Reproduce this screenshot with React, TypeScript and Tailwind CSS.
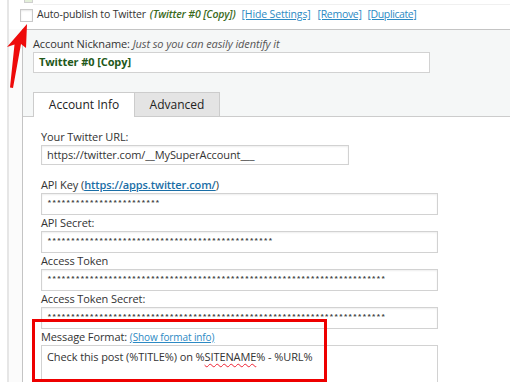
const font = { fontFamily: '"Open Sans", "Noto Sans", sans-serif' };

const Label = ({ children }: { children: React.ReactNode }) => (
  <div className="h-[16px] leading-[16px] text-[11px] tracking-[-0.1px] text-[#333] whitespace-nowrap">{children}</div>
);

const Field = ({ label, value, w = "w-[397px]", h = "h-[22px]" }: { label: React.ReactNode; value: string; w?: string; h?: string }) => (
  <div className="flex flex-col">
    <Label>{label}</Label>
    <div className={`${w} ${h} border border-[#d2d2d2] bg-white shadow-[inset_0_1px_2px_rgba(0,0,0,0.07)] flex items-center px-[5px] text-[11px] tracking-[-0.1px] text-[#333] overflow-hidden whitespace-nowrap`}>
      {value}
    </div>
  </div>
);

const stars = (n: number) => "*".repeat(n);

const SecretField = ({ label, n }: { label: React.ReactNode; n: number }) => (
  <div className="flex flex-col">
    <Label>{label}</Label>
    <div className="w-[397px] h-[22px] border border-[#d2d2d2] bg-white shadow-[inset_0_1px_2px_rgba(0,0,0,0.07)] flex items-center px-[5px] overflow-hidden whitespace-nowrap">
      <span className="text-[8px] tracking-[-0.1px] text-[#444] font-bold leading-none -mt-[3px]" style={{ fontFamily: '"Liberation Mono", monospace' }}>
        {stars(n)}
      </span>
    </div>
  </div>
);

export default function App() {
  return (
    <div className="relative w-[510px] h-[382px] overflow-hidden bg-white" style={font}>
      <div className="flex h-full">
        {/* left gutter */}
        <div className="w-[7px] shrink-0" />
        <div className="w-[2px] shrink-0 bg-[#e6e6e6]" />
        <div className="flex-1 flex flex-col bg-[#fbfbfb]">
          {/* header row */}
          <div className="h-[29px] shrink-0 flex items-center pl-[11px] pt-[1px] bg-white text-[10.5px] tracking-[-0.15px]">
            <div className="w-[13px] h-[13px] border border-[#c9c9c9] bg-white shadow-[inset_0_1px_2px_rgba(0,0,0,0.1)]" />
            <span className="ml-[4px] text-[#333]">Auto-publish to Twitter</span>
            <span className="ml-[4px] italic font-semibold text-[#3b6a1c]">(Twitter #0 [Copy])</span>
            <a className="ml-[6px] text-[#2c8ac4] underline">[Hide Settings]</a>
            <a className="ml-[7px] text-[#2c8ac4] underline tracking-[-0.3px]">[Remove]</a>
            <a className="ml-[6px] text-[#2c8ac4] underline tracking-[-0.4px]">[Duplicate]</a>
          </div>

          {/* settings panel */}
          <div className="ml-[13px] flex-1 flex flex-col border-t border-l border-[#c4c4c4]">
            <div className="bg-[#f5f7f7] pl-[10px] pt-[6px]">
              <Label>
                Account Nickname: <span className="italic text-[#555]">Just so you can easily identify it</span>
              </Label>
              <div className="w-[397px] h-[21px] border border-[#d2d2d2] bg-white flex items-center px-[5px] text-[11px] tracking-[-0.1px] font-bold text-[#22581a]">
                Twitter #0 [Copy]
              </div>

              {/* tabs */}
              <div className="mt-[19px] -ml-[10px] pl-[10px] flex items-end border-b border-[#cccccc] h-[25px]">
                <div className="w-[102px] h-[25px] -mb-px bg-white border border-b-0 border-[#cccccc] flex items-center justify-center text-[12px] text-[#222]">
                  Account Info
                </div>
                <div className="w-[85px] h-[24px] bg-[#e4e4e4] border border-l-0 border-b-0 border-[#cccccc] flex items-center justify-center text-[12px] text-[#222]">
                  Advanced
                </div>
              </div>
            </div>

            {/* tab content */}
            <div className="flex-1 bg-white pl-[18px] pt-[12px] flex flex-col">
              <Field label="Your Twitter URL:" value="https://twitter.com/__MySuperAccount___" w="w-[308px]" h="h-[20px]" />
              <div className="mt-[12px] flex flex-col">
                <SecretField
                  label={
                    <>
                      API Key (<a className="text-[#1a6ea6] underline font-semibold">https://apps.twitter.com/</a>)
                    </>
                  }
                  n={24}
                />
                <SecretField label="API Secret:" n={48} />
                <SecretField label="Access Token" n={72} />
                <SecretField label="Access Token Secret:" n={72} />
                <div className="flex flex-col">
                  <Label>
                    Message Format: <a className="text-[#2c8ac4] underline text-[10px]">(Show format info)</a>
                  </Label>
                  <div className="w-[397px] h-[60px] border border-[#d2d2d2] bg-white px-[5px] pt-[3px] text-[11px] tracking-[-0.1px] text-[#333] whitespace-nowrap">
                    Check this post (%TITLE%) on %<span className="underline decoration-wavy decoration-[#e23] decoration-1 underline-offset-2">SITENAME</span>% - %URL%
                  </div>
                </div>
              </div>
            </div>
          </div>
        </div>
      </div>

      {/* faint strip of the previous row */}
      <div className="absolute left-[24px] top-0 w-[9px] h-[3px] border-x border-b border-[#cfcfcf] bg-[#e3efd9]" />
      <div className="absolute left-[33px] top-[4px] right-0 h-px bg-[#f0f0f0]" />

      {/* red highlight box */}
      <div className="absolute left-[32px] top-[319px] w-[295px] h-[63px] border-[3px] border-[#ee0000]" />

      {/* red arrow */}
      <svg className="absolute left-0 top-0" width="40" height="95" viewBox="0 0 40 95">
        <path d="M27 24 L26 48 L21 44 L13 88 L10 87.5 L14.5 44.5 L7 47 Z" fill="#ee0a0a" />
      </svg>
    </div>
  );
}
